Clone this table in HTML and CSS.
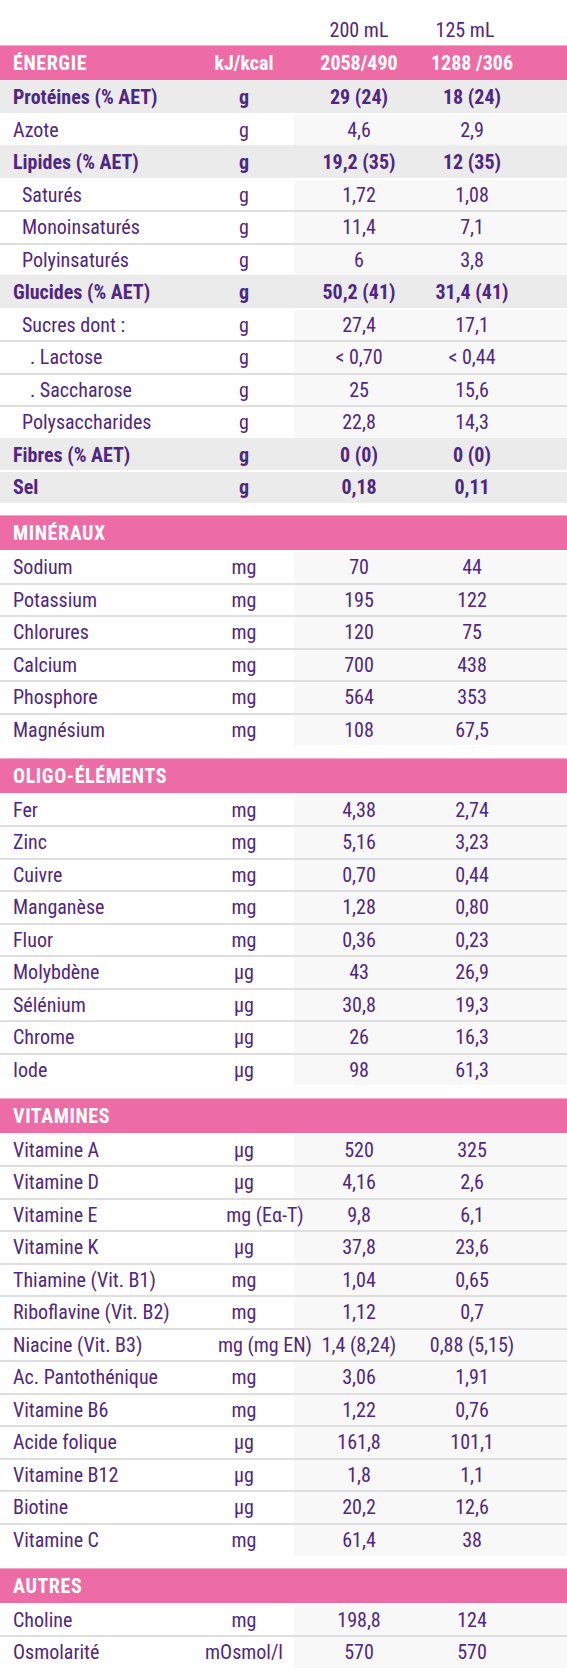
FILE: index.html
```html
<!DOCTYPE html>
<html lang="fr">
<head>
<meta charset="utf-8">
<title>Valeurs nutritionnelles</title>
<link rel="stylesheet" href="styles.css">
</head>
<body>
<div class="table">
  <div class="head">
    <span class="lbl"></span><span class="unit"></span><span class="v1">200 mL</span><span class="v2">125 mL</span>
  </div>
  <div class="row pink">
    <span class="lbl">ÉNERGIE</span><span class="unit">kJ/kcal</span><span class="v1">2058/490</span><span class="v2">1288 /306</span>
  </div>
  <div class="row bold"><span class="lbl">Protéines (% AET)</span><span class="unit">g</span><span class="v1">29 (24)</span><span class="v2">18 (24)</span></div>
  <div class="row plain"><span class="lbl">Azote</span><span class="unit">g</span><span class="v1">4,6</span><span class="v2">2,9</span></div>
  <div class="row bold"><span class="lbl">Lipides (% AET)</span><span class="unit">g</span><span class="v1">19,2 (35)</span><span class="v2">12 (35)</span></div>
  <div class="row plain"><span class="lbl in1">Saturés</span><span class="unit">g</span><span class="v1">1,72</span><span class="v2">1,08</span></div>
  <div class="row plain"><span class="lbl in1">Monoinsaturés</span><span class="unit">g</span><span class="v1">11,4</span><span class="v2">7,1</span></div>
  <div class="row plain"><span class="lbl in1">Polyinsaturés</span><span class="unit">g</span><span class="v1">6</span><span class="v2">3,8</span></div>
  <div class="row bold"><span class="lbl">Glucides (% AET)</span><span class="unit">g</span><span class="v1">50,2 (41)</span><span class="v2">31,4 (41)</span></div>
  <div class="row plain"><span class="lbl in1">Sucres dont :</span><span class="unit">g</span><span class="v1">27,4</span><span class="v2">17,1</span></div>
  <div class="row plain"><span class="lbl in2">. Lactose</span><span class="unit">g</span><span class="v1">&lt; 0,70</span><span class="v2">&lt; 0,44</span></div>
  <div class="row plain"><span class="lbl in2">. Saccharose</span><span class="unit">g</span><span class="v1">25</span><span class="v2">15,6</span></div>
  <div class="row plain"><span class="lbl in1">Polysaccharides</span><span class="unit">g</span><span class="v1">22,8</span><span class="v2">14,3</span></div>
  <div class="row bold"><span class="lbl">Fibres (% AET)</span><span class="unit">g</span><span class="v1">0 (0)</span><span class="v2">0 (0)</span></div>
  <div class="row bold"><span class="lbl">Sel</span><span class="unit">g</span><span class="v1">0,18</span><span class="v2">0,11</span></div>

  <div class="section">
    <div class="row pink"><span class="lbl">MINÉRAUX</span><span class="unit"></span><span class="v1"></span><span class="v2"></span></div>
    <div class="row plain"><span class="lbl">Sodium</span><span class="unit">mg</span><span class="v1">70</span><span class="v2">44</span></div>
    <div class="row plain"><span class="lbl">Potassium</span><span class="unit">mg</span><span class="v1">195</span><span class="v2">122</span></div>
    <div class="row plain"><span class="lbl">Chlorures</span><span class="unit">mg</span><span class="v1">120</span><span class="v2">75</span></div>
    <div class="row plain"><span class="lbl">Calcium</span><span class="unit">mg</span><span class="v1">700</span><span class="v2">438</span></div>
    <div class="row plain"><span class="lbl">Phosphore</span><span class="unit">mg</span><span class="v1">564</span><span class="v2">353</span></div>
    <div class="row plain"><span class="lbl">Magnésium</span><span class="unit">mg</span><span class="v1">108</span><span class="v2">67,5</span></div>
  </div>

  <div class="section">
    <div class="row pink"><span class="lbl">OLIGO-ÉLÉMENTS</span><span class="unit"></span><span class="v1"></span><span class="v2"></span></div>
    <div class="row plain"><span class="lbl">Fer</span><span class="unit">mg</span><span class="v1">4,38</span><span class="v2">2,74</span></div>
    <div class="row plain"><span class="lbl">Zinc</span><span class="unit">mg</span><span class="v1">5,16</span><span class="v2">3,23</span></div>
    <div class="row plain"><span class="lbl">Cuivre</span><span class="unit">mg</span><span class="v1">0,70</span><span class="v2">0,44</span></div>
    <div class="row plain"><span class="lbl">Manganèse</span><span class="unit">mg</span><span class="v1">1,28</span><span class="v2">0,80</span></div>
    <div class="row plain"><span class="lbl">Fluor</span><span class="unit">mg</span><span class="v1">0,36</span><span class="v2">0,23</span></div>
    <div class="row plain"><span class="lbl">Molybdène</span><span class="unit">µg</span><span class="v1">43</span><span class="v2">26,9</span></div>
    <div class="row plain"><span class="lbl">Sélénium</span><span class="unit">µg</span><span class="v1">30,8</span><span class="v2">19,3</span></div>
    <div class="row plain"><span class="lbl">Chrome</span><span class="unit">µg</span><span class="v1">26</span><span class="v2">16,3</span></div>
    <div class="row plain"><span class="lbl">Iode</span><span class="unit">µg</span><span class="v1">98</span><span class="v2">61,3</span></div>
  </div>

  <div class="section">
    <div class="row pink"><span class="lbl">VITAMINES</span><span class="unit"></span><span class="v1"></span><span class="v2"></span></div>
    <div class="row plain"><span class="lbl">Vitamine A</span><span class="unit">µg</span><span class="v1">520</span><span class="v2">325</span></div>
    <div class="row plain"><span class="lbl">Vitamine D</span><span class="unit">µg</span><span class="v1">4,16</span><span class="v2">2,6</span></div>
    <div class="row plain"><span class="lbl">Vitamine E</span><span class="unit wide">mg (Eα-T)</span><span class="v1">9,8</span><span class="v2">6,1</span></div>
    <div class="row plain"><span class="lbl">Vitamine K</span><span class="unit">µg</span><span class="v1">37,8</span><span class="v2">23,6</span></div>
    <div class="row plain"><span class="lbl">Thiamine (Vit. B1)</span><span class="unit">mg</span><span class="v1">1,04</span><span class="v2">0,65</span></div>
    <div class="row plain"><span class="lbl">Riboflavine (Vit. B2)</span><span class="unit">mg</span><span class="v1">1,12</span><span class="v2">0,7</span></div>
    <div class="row plain"><span class="lbl">Niacine (Vit. B3)</span><span class="unit wide">mg (mg EN)</span><span class="v1">1,4 (8,24)</span><span class="v2">0,88 (5,15)</span></div>
    <div class="row plain"><span class="lbl">Ac. Pantothénique</span><span class="unit">mg</span><span class="v1">3,06</span><span class="v2">1,91</span></div>
    <div class="row plain"><span class="lbl">Vitamine B6</span><span class="unit">mg</span><span class="v1">1,22</span><span class="v2">0,76</span></div>
    <div class="row plain"><span class="lbl">Acide folique</span><span class="unit">µg</span><span class="v1">161,8</span><span class="v2">101,1</span></div>
    <div class="row plain"><span class="lbl">Vitamine B12</span><span class="unit">µg</span><span class="v1">1,8</span><span class="v2">1,1</span></div>
    <div class="row plain"><span class="lbl">Biotine</span><span class="unit">µg</span><span class="v1">20,2</span><span class="v2">12,6</span></div>
    <div class="row plain"><span class="lbl">Vitamine C</span><span class="unit">mg</span><span class="v1">61,4</span><span class="v2">38</span></div>
  </div>

  <div class="section">
    <div class="row pink"><span class="lbl">AUTRES</span><span class="unit"></span><span class="v1"></span><span class="v2"></span></div>
    <div class="row plain"><span class="lbl">Choline</span><span class="unit">mg</span><span class="v1">198,8</span><span class="v2">124</span></div>
    <div class="row plain"><span class="lbl">Osmolarité</span><span class="unit">mOsmol/l</span><span class="v1">570</span><span class="v2">570</span></div>
  </div>
</div>
</body>
</html>
```
FILE: styles.css
```css
html, body {
  margin: 0;
  padding: 0;
  background: #ffffff;
}

body {
  font-family: Roboto, "Liberation Sans", sans-serif;
  font-stretch: 75%;
  color: #4f2683;
  font-size: 20px;
}

.table {
  width: 567px;
  padding-bottom: 3px;
}

.head,
.row {
  display: grid;
  grid-template-columns: 194px 100px 130px 143px;
  box-sizing: border-box;
}

.head {
  height: 45px;
  align-items: end;
}

.head span {
  line-height: 30px;
}

.row {
  height: 32.5px;
  border-top: 2px solid transparent;
  background: #ffffff;
}

.lbl,
.unit,
.v1,
.v2 {
  line-height: 30.5px;
  white-space: nowrap;
}

.lbl {
  padding-left: 13px;
}

.lbl.in1 {
  padding-left: 22px;
}

.lbl.in2 {
  padding-left: 30px;
}

.unit,
.v1,
.v2 {
  text-align: center;
}

.unit.wide {
  margin-right: -42px;
  z-index: 1;
}

.v2 {
  padding-right: 47px;
}

.row .v1,
.row .v2 {
  background: #f8f8f8;
}

.head .v2 {
  padding-right: 61px;
}

.row.plain + .row.plain {
  border-top-color: #dedede;
}

.row.bold {
  background: #ebebeb;
  font-weight: 700;
  font-stretch: 77%;
}

.row.bold + .row.bold {
  border-top-color: #ffffff;
}

.row.bold .v1,
.row.bold .v2 {
  background: transparent;
}

.row.pink {
  height: 35px;
  border-top: 1px solid #f4a9ca;
  background: #ed6ca5;
  color: #ffffff;
  font-weight: 700;
  font-stretch: 84%;
}

.row.pink .lbl {
  letter-spacing: 0.6px;
}

.row.pink .lbl,
.row.pink .unit,
.row.pink .v1,
.row.pink .v2 {
  line-height: 34px;
  background: transparent;
}

.section {
  margin-top: 12.5px;
}
```
